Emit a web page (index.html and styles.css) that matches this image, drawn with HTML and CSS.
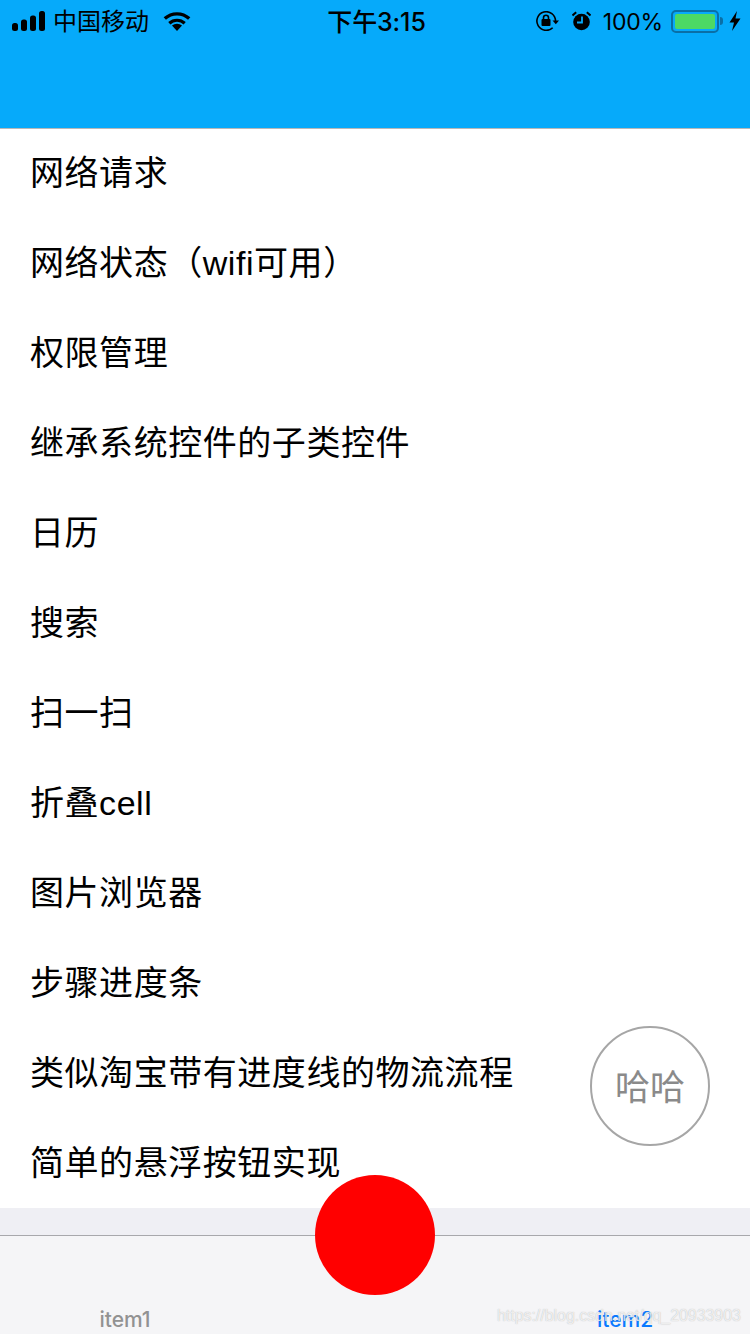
FILE: index.html
```html
<!DOCTYPE html>
<html lang="zh">
<head>
<meta charset="utf-8">
<title>列表</title>
<link rel="stylesheet" href="styles.css">
</head>
<body>
<div class="screen">
  <header class="nav">
    <div class="status">
      <div class="status-left">
        <svg class="signal" width="33" height="20" viewBox="0 0 33 20"><rect x="0" y="12" width="6" height="8" rx="2.500"/><rect x="9" y="8.500" width="6" height="11.500" rx="2.500"/><rect x="18" y="4.500" width="6" height="15.500" rx="2.500"/><rect x="27" y="0" width="6" height="20" rx="2.500"/></svg>
        <span class="carrier">中国移动</span>
        <svg class="wifi" width="28" height="20" viewBox="0 0 28 20"><path d="M14 20l-5-5.400a7.500 7.500 0 0 1 10 0z"/><path d="M1.800 7.600a18 18 0 0 1 24.400 0" fill="none" stroke="#000" stroke-width="3.400"/><path d="M6.300 12.200a11.500 11.500 0 0 1 15.400 0" fill="none" stroke="#000" stroke-width="3.200"/></svg>
      </div>
      <div class="status-time">下午3:15</div>
      <div class="status-right">
        <svg class="lock" width="23" height="20" viewBox="0 0 23 20"><path d="M19.500 10a9.300 9.300 0 1 0-2.800 6.700" fill="none" stroke="#000" stroke-width="1.600"/><path d="M16.500 9.500h6.500l-3.200 3.800z"/><rect x="5.500" y="8" width="9" height="7" rx="1"/><path d="M7.500 8.500V6.800a2.500 2.500 0 0 1 5 0v1.700" fill="none" stroke="#000" stroke-width="1.600"/></svg>
        <svg class="alarm" width="19" height="20" viewBox="0 0 19 20"><circle cx="9.500" cy="11" r="8.300"/><path d="M0.500 4.500L4.200 1.200M18.500 4.500L14.800 1.200" stroke="#000" stroke-width="2" fill="none"/><path d="M10 5.500v6H5" stroke="#06aafa" stroke-width="1.800" fill="none"/></svg>
        <span class="percent">100%</span>
        <div class="battery"><div class="battery-fill"></div></div>
        <div class="battery-cap"></div>
        <svg class="bolt" width="12" height="20" viewBox="0 0 12 20"><path d="M8 0L0.500 11.500H5L3 20L11.500 7.500H6.500z"/></svg>
      </div>
    </div>
  </header>
  <ul class="list">
    <li class="row">网络请求</li>
    <li class="row">网络状态（wifi可用）</li>
    <li class="row">权限管理</li>
    <li class="row">继承系统控件的子类控件</li>
    <li class="row">日历</li>
    <li class="row">搜索</li>
    <li class="row">扫一扫</li>
    <li class="row">折叠cell</li>
    <li class="row">图片浏览器</li>
    <li class="row">步骤进度条</li>
    <li class="row">类似淘宝带有进度线的物流流程</li>
    <li class="row">简单的悬浮按钮实现</li>
  </ul>
  <div class="gap"></div>
  <nav class="tabbar">
    <span class="tab">item1</span>
    <span class="tab"></span>
    <span class="tab tab-active">item2</span>
  </nav>
  <div class="float-btn">哈哈</div>
  <div class="red-btn"></div>
  <div class="watermark">https://blog.csdn.net/qq_20933903</div>
</div>
</body>
</html>
```
FILE: styles.css
```css
* { box-sizing: border-box; }
html, body { margin: 0; padding: 0; }
body {
  font-family: "Liberation Sans", "Noto Sans CJK SC", sans-serif;
  background: #fff;
  color: #000;
}
.screen {
  position: relative;
  width: 750px;
  height: 1334px;
  overflow: hidden;
  display: flex;
  flex-direction: column;
}
.nav {
  position: relative;
  z-index: 1;
  height: 128px;
  background: #06aafa;
  box-shadow: 0 1px 0 #b8b8b8;
  flex: none;
}
.status {
  height: 40px;
  display: grid;
  grid-template-columns: 1fr auto 1fr;
  align-items: center;
  padding: 0 9px 0 12px;
  font-size: 24px;
}
.status-left, .status-right { display: flex; align-items: center; height: 40px; }
.status-right { justify-content: flex-end; }
.status-time {
  font-family: Inter, "Noto Sans CJK SC", sans-serif;
  font-weight: 500;
  font-size: 25px;
  line-height: 40px;
  padding-top: 2px;
  letter-spacing: -0.1px;
}
.carrier { margin-left: 8px; line-height: 40px; padding-top: 2px; }
.wifi { margin-left: 14px; }
.percent {
  font-family: Inter, sans-serif;
  margin-left: 12px;
  font-size: 23px;
  letter-spacing: -0.2px;
  line-height: 40px;
  padding-top: 2px;
}
.alarm { margin-left: 13px; }
.battery {
  width: 48px;
  height: 23px;
  margin-left: 8px;
  border: 2px solid #0a6fa6;
  border-radius: 5px;
  padding: 2px;
}
.battery-fill { width: 100%; height: 100%; background: #4cd964; border-radius: 2px; }
.battery-cap {
  width: 3px;
  height: 8px;
  margin-left: 1px;
  background: #0a6fa6;
  border-radius: 0 3px 3px 0;
}
.bolt { margin-left: 6px; }
.list {
  list-style: none;
  margin: 0;
  padding: 0;
  flex: none;
  background: #fff;
}
.row {
  height: 90px;
  line-height: 91px;
  padding-left: 30px;
  font-size: 34px;
  letter-spacing: 0.55px;
  white-space: nowrap;
}
.gap { height: 27px; background: #efeff4; flex: none; }
.tabbar {
  flex: 1;
  border-top: 1px solid #a8a8ac;
  background: #f5f5f7;
  display: flex;
  align-items: flex-end;
}
.tab {
  flex: 1;
  text-align: center;
  font-family: Inter, sans-serif;
  font-weight: 500;
  font-size: 21px;
  line-height: 26px;
  padding-bottom: 1px;
  color: #929292;
}
.tab-active { color: #0a7aff; }
.float-btn {
  position: absolute;
  left: 590px;
  top: 1026px;
  width: 120px;
  height: 120px;
  padding-bottom: 3px;
  border: 2px solid #a6a6a6;
  border-radius: 50%;
  display: flex;
  align-items: center;
  justify-content: center;
  font-size: 35px;
  color: #8a8a8a;
  background: #fff;
}
.red-btn {
  position: absolute;
  left: 315px;
  top: 1175px;
  width: 120px;
  height: 120px;
  border-radius: 50%;
  background: #f00;
}
.watermark {
  position: absolute;
  left: 497px;
  top: 1305px;
  font-size: 15.900px;
  line-height: 22px;
  white-space: nowrap;
  color: rgba(255, 255, 255, 0.75);
  text-shadow: 0 0 1px rgba(120, 120, 120, 0.55);
}
```
